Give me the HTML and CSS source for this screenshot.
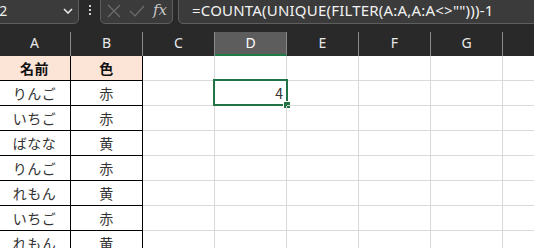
FILE: index.html
```html
<!DOCTYPE html>
<html lang="ja">
<head>
<meta charset="utf-8">
<link rel="stylesheet" href="styles.css">
</head>
<body>
<div class="app">
  <div class="topbar">
    <div class="namebox">
      <span class="namebox-text">D2</span>
      <svg class="chev" width="10" height="6" viewBox="0 0 10 6"><path d="M1 1 L5 5 L9 1" fill="none" stroke="#e8e8e8" stroke-width="1.6"/></svg>
    </div>
    <div class="vdots"><i></i><i></i><i></i></div>
    <div class="fxbox">
      <svg class="ico" width="14" height="14" viewBox="0 0 14 14"><path d="M1 1 L13 13 M13 1 L1 13" stroke="#6e6e6e" stroke-width="1.2" fill="none"/></svg>
      <svg class="ico" width="16" height="14" viewBox="0 0 16 14"><path d="M1 7 L6 12 L15 2" stroke="#6e6e6e" stroke-width="1.2" fill="none"/></svg>
      <span class="fx">fx</span>
    </div>
    <div class="formula">=COUNTA(UNIQUE(FILTER(A:A,A:A&lt;&gt;"")))-1</div>
  </div>
  <div class="colheads">
    <div class="ch">A</div>
    <div class="ch">B</div>
    <div class="ch">C</div>
    <div class="ch ch-sel">D</div>
    <div class="ch">E</div>
    <div class="ch">F</div>
    <div class="ch">G</div>
  </div>
  <div class="sheet">
    <div class="row">
      <div class="c t hd">名前</div><div class="c t hd">色</div><div class="c"></div><div class="c"></div><div class="c"></div><div class="c"></div><div class="c"></div><div class="c"></div>
    </div>
    <div class="row">
      <div class="c t">りんご</div><div class="c t">赤</div><div class="c"></div><div class="c num"><span>4</span><div class="sel"></div><div class="handle"></div></div><div class="c"></div><div class="c"></div><div class="c"></div><div class="c"></div>
    </div>
    <div class="row">
      <div class="c t">いちご</div><div class="c t">赤</div><div class="c"></div><div class="c"></div><div class="c"></div><div class="c"></div><div class="c"></div><div class="c"></div>
    </div>
    <div class="row">
      <div class="c t">ばなな</div><div class="c t">黄</div><div class="c"></div><div class="c"></div><div class="c"></div><div class="c"></div><div class="c"></div><div class="c"></div>
    </div>
    <div class="row">
      <div class="c t">りんご</div><div class="c t">赤</div><div class="c"></div><div class="c"></div><div class="c"></div><div class="c"></div><div class="c"></div><div class="c"></div>
    </div>
    <div class="row">
      <div class="c t">れもん</div><div class="c t">黄</div><div class="c"></div><div class="c"></div><div class="c"></div><div class="c"></div><div class="c"></div><div class="c"></div>
    </div>
    <div class="row">
      <div class="c t">いちご</div><div class="c t">赤</div><div class="c"></div><div class="c"></div><div class="c"></div><div class="c"></div><div class="c"></div><div class="c"></div>
    </div>
    <div class="row">
      <div class="c t">れもん</div><div class="c t">黄</div><div class="c"></div><div class="c"></div><div class="c"></div><div class="c"></div><div class="c"></div><div class="c"></div>
    </div>
  </div>
</div>
</body>
</html>
```
FILE: styles.css
```css
html, body {
  margin: 0;
  padding: 0;
  background: #ffffff;
  overflow: hidden;
}
body {
  width: 534px;
  height: 248px;
  font-family: "Noto Sans", "Noto Sans CJK JP", sans-serif;
}
.app {
  width: 534px;
  height: 248px;
  overflow: hidden;
}
.topbar {
  height: 32px;
  background: #292929;
  display: flex;
  align-items: flex-start;
  overflow: hidden;
}
.namebox {
  flex: none;
  width: 88px;
  height: 26px;
  margin-top: -2px;
  margin-left: -9px;
  box-sizing: border-box;
  background: #3b3b3b;
  border: 1px solid #5e5e5e;
  border-radius: 0 0 5px 5px;
  display: flex;
  align-items: center;
  padding-right: 5px;
}
.namebox-text {
  color: #f0f0f0;
  font-size: 14px;
  margin-left: -3px;
  margin-top: -2px;
}
.chev {
  margin-left: auto;
}
.vdots {
  flex: none;
  width: 21px;
  height: 24px;
  display: flex;
  flex-direction: column;
  align-items: center;
  justify-content: center;
  gap: 2px;
  margin-top: -2px;
}
.vdots i {
  display: block;
  width: 2px;
  height: 2px;
  background: #d0d0d0;
}
.fxbox {
  flex: none;
  width: 73px;
  height: 26px;
  margin-top: -2px;
  box-sizing: border-box;
  background: #3b3b3b;
  border: 1px solid #5e5e5e;
  border-radius: 0 0 5px 5px;
  display: flex;
  align-items: center;
  padding-left: 6px;
  gap: 8px;
}
.ico {
  display: block;
}
.fx {
  font-family: "DejaVu Serif", "Liberation Serif", serif;
  font-style: italic;
  color: #c8c8c8;
  font-size: 15px;
  margin-top: -3px;
}
.formula {
  flex: 1;
  height: 26px;
  margin-top: -2px;
  margin-left: 5px;
  margin-right: -6px;
  box-sizing: border-box;
  background: #3b3b3b;
  border: 1px solid #5e5e5e;
  border-radius: 0 0 5px 5px;
  color: #f2f2f2;
  font-size: 15px;
  letter-spacing: 0.2px;
  line-height: 22px;
  padding-left: 13px;
  white-space: nowrap;
  overflow: hidden;
}
.colheads {
  display: grid;
  grid-template-columns: repeat(7, 72px);
  margin-left: -1px;
  height: 24px;
  background: #292929;
}
.ch {
  box-sizing: border-box;
  border-right: 1px solid #8a8a8a;
  color: #e8e8e8;
  font-size: 14px;
  text-align: center;
  line-height: 22px;
  height: 24px;
}
.ch-sel {
  background: #5d5d5d;
  color: #ffffff;
  border-bottom: 2px solid #1f7a47;
}
.sheet {
  margin-left: -1px;
}
.row {
  display: grid;
  grid-template-columns: repeat(8, 72px);
  height: 25px;
}
.c {
  box-sizing: border-box;
  height: 25px;
  border-right: 1px solid #dadada;
  border-bottom: 1px solid #dadada;
  position: relative;
  font-family: "Noto Sans CJK JP", sans-serif;
  font-size: 14px;
  line-height: 24px;
  color: #333333;
}
.t {
  text-align: center;
  letter-spacing: 0.5px;
  border-right-color: #000000;
  border-bottom-color: #000000;
}
.hd {
  background: #fce4d6;
  font-weight: bold;
  color: #111111;
}
.num {
  text-align: right;
  padding-right: 3px;
}
.sel {
  position: absolute;
  left: -2px;
  top: -2px;
  width: 75px;
  height: 27px;
  box-sizing: border-box;
  border: 2px solid #217346;
}
.handle {
  position: absolute;
  left: 68px;
  top: 20px;
  width: 6px;
  height: 6px;
  background: #217346;
  border: 1px solid #ffffff;
}
```
